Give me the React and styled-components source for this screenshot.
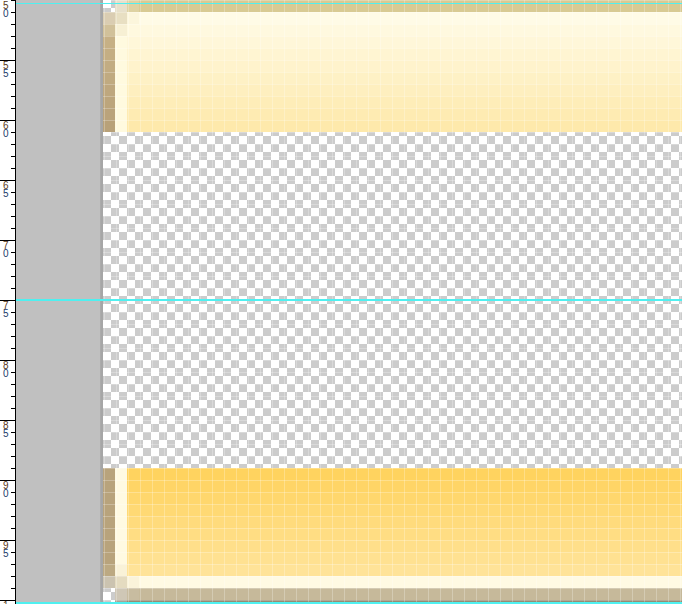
import React from "react";
import styled, { createGlobalStyle } from "styled-components";

const GlobalStyle = createGlobalStyle`
  html, body {
    margin: 0;
    padding: 0;
    height: 604px;
    overflow: hidden;
    background: #c0c0c0;
  }
  #root {
    height: 100%;
  }
`;

// blend two hex colours, t from 0 to 1
const mix = (from, to, t) => {
  const a = from.match(/\w\w/g).map((h) => parseInt(h, 16));
  const b = to.match(/\w\w/g).map((h) => parseInt(h, 16));
  return (
    "#" +
    a
      .map((v, i) => Math.round(v + (b[i] - v) * t).toString(16).padStart(2, "0"))
      .join("")
  );
};

const ramp = (count, from, to) =>
  Array.from({ length: count }, (_, i) => mix(from, to, count === 1 ? 0 : i / (count - 1)));

const topFill = ramp(10, "#fffbe6", "#fee9ab");
const topEdge = ramp(8, "#c6b085", "#b8a179");
const bottomFill = ramp(9, "#ffd35f", "#ffe398");

const topRows = [
  { a: null, b: "#e7e0cb", c: "#ded2a2", d: "#d8ca93" },
  { a: "#dacdb2", b: "#e8dfc2", c: "#fcf6dc", d: topFill[0] },
  { a: "#d1c19a", b: "#f7f0d4", d: topFill[1] },
  ...topEdge.map((a, i) => ({ a, b: "#fffadf", d: topFill[i + 2] })),
];

const bottomRows = [
  ...bottomFill.map((d, i) => ({
    a: i === 8 ? "#bca982" : "#b8a37c",
    b: i === 8 ? "#f9f2d8" : "#fffae2",
    d,
  })),
  { a: "#cbc3b0", b: "#e4dbc0", c: "#faf3da", d: "#fffae3" },
  { a: null, b: "#cfc7b6", c: "#c8bca0", d: "#c6b99a" },
  { a: null, b: "#aaa396", d: "#978b72" },
];

const labels = ["50", "55", "60", "65", "70", "75", "80", "85", "90", "95", "1"];

const checker = `
  background-color: #ffffff;
  background-image:
    linear-gradient(45deg, #cccccc 25%, transparent 25%, transparent 75%, #cccccc 75%),
    linear-gradient(45deg, #cccccc 25%, transparent 25%, transparent 75%, #cccccc 75%);
  background-size: 16px 16px;
  background-position: 0 0, 8px 8px;
`;

const PixelRow = ({ row }) => (
  <St.Row>
    <St.Cell $bg={row.a} />
    <St.Cell $bg={row.b} />
    {row.c && <St.Cell $bg={row.c} />}
    <St.Fill $bg={row.d} />
  </St.Row>
);

const App = () => {
  return (
    <>
      <GlobalStyle />
      <St.Page>
        <St.Ruler>
          {labels.map((label) => (
            <St.RulerSection key={label}>
              <St.RulerLabel>
                {label.split("").map((digit, i) => (
                  <St.Digit key={i} $first={i === 0}>
                    {digit}
                  </St.Digit>
                ))}
              </St.RulerLabel>
            </St.RulerSection>
          ))}
        </St.Ruler>
        <St.Panel />
        <St.Canvas>
          {topRows.map((row, i) => (
            <PixelRow key={`t${i}`} row={row} />
          ))}
          <St.Transparent $rows={28} />
          {bottomRows.map((row, i) => (
            <PixelRow key={`b${i}`} row={row} />
          ))}
        </St.Canvas>
        <St.Guide $top={3} $h={1} />
        <St.Guide $top={299} $h={2} />
        <St.Guide $top={602} $h={2} />
      </St.Page>
    </>
  );
};

export default App;

const St = {
  Page: styled.div`
    position: relative;
    display: flex;
    height: 604px;
    overflow: hidden;
  `,
  Ruler: styled.div`
    display: flex;
    flex-direction: column;
    flex: 0 0 15px;
    background: #ffffff;
    border-right: 1px solid #000000;
  `,
  RulerSection: styled.div`
    flex: 0 0 60px;
    box-sizing: border-box;
    border-top: 1px solid #000000;
    background-image: linear-gradient(to bottom, transparent 11px, #000000 11px, #000000 12px);
    background-size: 4px 12px;
    background-repeat: repeat-y;
    background-position: right 0 top 0;
    &:first-child {
      border-top-color: transparent;
    }
  `,
  RulerLabel: styled.div`
    display: flex;
    flex-direction: column;
    padding: 1px 0 0 3px;
    font-family: "Liberation Sans", Arial, sans-serif;
    font-size: 10px;
    line-height: 8px;
  `,
  Digit: styled.span`
    display: block;
    height: 8px;
    color: ${({ $first }) => ($first ? "#5a3a1a" : "#1a3a6a")};
  `,
  Panel: styled.div`
    flex: 0 0 85px;
    background: linear-gradient(to right, #c0c0c0 0, #c0c0c0 84px, #b2b2b2 84px, #a4a4a4 100%);
    border-right: 2px solid #a6a6a6;
  `,
  Canvas: styled.div`
    position: relative;
    flex: 1;
    display: flex;
    flex-direction: column;
    ${checker}
    &::after {
      content: "";
      position: absolute;
      inset: 0;
      pointer-events: none;
      background-image:
        linear-gradient(to right, rgba(255, 255, 255, 0.25) 1px, transparent 1px),
        linear-gradient(to bottom, rgba(255, 255, 255, 0.25) 1px, transparent 1px);
      background-size: 12px 12px;
      background-position: 1px 0;
    }
  `,
  Row: styled.div`
    display: flex;
    flex: 0 0 12px;
  `,
  Cell: styled.div`
    flex: 0 0 12px;
    background: ${({ $bg }) => $bg || "transparent"};
  `,
  Fill: styled.div`
    flex: 1;
    background: ${({ $bg }) => $bg || "transparent"};
  `,
  Transparent: styled.div`
    flex: 0 0 ${({ $rows }) => $rows * 12}px;
  `,
  Guide: styled.div`
    position: absolute;
    left: 16px;
    right: 0;
    top: ${({ $top }) => $top}px;
    height: ${({ $h }) => $h}px;
    background: #4ff0f0;
  `,
};
